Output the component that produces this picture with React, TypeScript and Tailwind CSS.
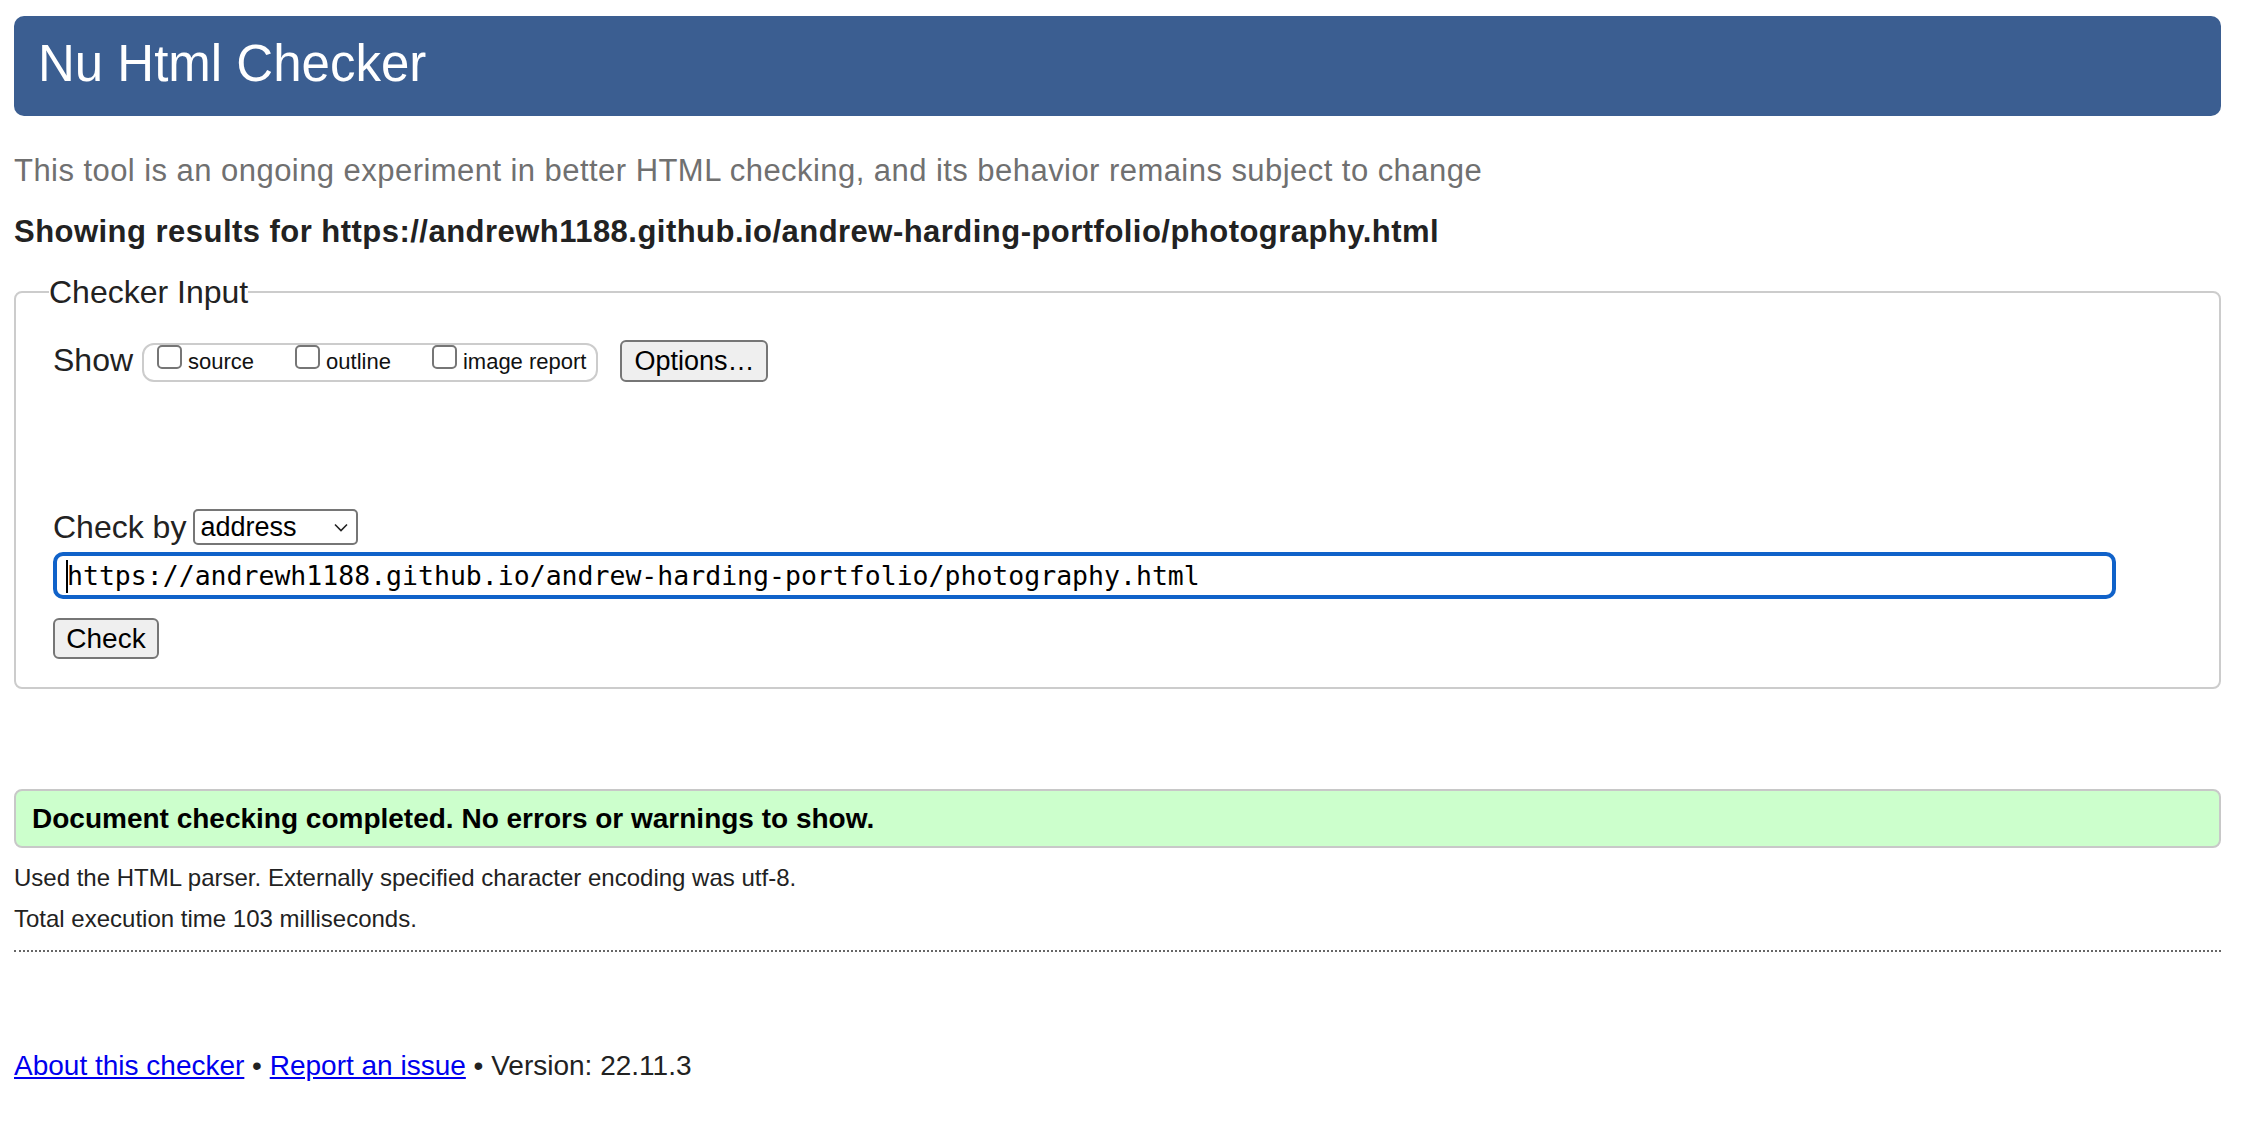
import React from "react";

function Checkbox() {
  return <span className="inline-block w-[25px] h-[24px] border-2 border-[#767676] rounded-[5px] bg-white shrink-0" />;
}

function CheckItem({ label }: { label: string }) {
  return (
    <span className="flex items-baseline">
      <Checkbox />
      <span className="ml-[6px] text-[22px] leading-none text-[#111]">{label}</span>
    </span>
  );
}

export default function App() {
  return (
    <div
      className="min-h-[1125px] bg-white pl-[14px] pr-[21px] pt-[16px] text-[#222]"
      style={{ fontFamily: '"Liberation Sans", Arial, Helvetica, sans-serif' }}
    >
      <header className="h-[100px] rounded-[10px] bg-[#3b5e91] pl-[24px] pt-[22px]">
        <h1 className="text-[51px] leading-none text-white font-normal">Nu Html Checker</h1>
      </header>

      <p className="mt-[39px] text-[31px] leading-none tracking-[0.45px] text-[#707070]">
        This tool is an ongoing experiment in better HTML checking, and its behavior remains subject to change
      </p>

      <p className="mt-[30px] text-[31px] leading-none tracking-[0.47px] font-bold text-[#222]">
        Showing results for https://andrewh1188.github.io/andrew-harding-portfolio/photography.html
      </p>

      <fieldset className="mt-[29px] border-2 border-[#cccccc] rounded-[8px] pb-[28px]">
        <legend className="ml-[33px] text-[32px] leading-none text-[#222]">Checker Input</legend>

        <div className="ml-[37px] mt-[32px] flex items-start">
          <span className="mt-[4px] text-[32px] leading-none text-[#222]">Show</span>
          <div className="ml-[9px] mt-[3px] h-[39px] border-2 border-[#cccccc] rounded-[12px] flex items-start gap-[41px] pl-[13px] pr-[10px]">
            <CheckItem label="source" />
            <CheckItem label="outline" />
            <CheckItem label="image report" />
          </div>
          <button className="ml-[22px] w-[148px] h-[42px] border-2 border-[#767676] rounded-[6px] bg-[#efefef] text-[27px] leading-none text-black">
            Options…
          </button>
        </div>

        <div className="ml-[37px] mt-[127px] flex items-start">
          <span className="mt-[2px] text-[32px] leading-none text-[#222]">Check by</span>
          <div className="ml-[7px] w-[165px] h-[36px] border-2 border-[#767676] rounded-[5px] bg-white flex items-center justify-between pl-[5px] pr-[8px]">
            <span className="text-[27px] leading-none text-black">address</span>
            <svg width="14" height="9" viewBox="0 0 14 9" className="shrink-0">
              <polyline points="1,1.5 7,7.5 13,1.5" fill="none" stroke="#222" strokeWidth="1.6" />
            </svg>
          </div>
        </div>

        <div className="ml-[37px] mt-[7px] w-[2063px] h-[47px] border-4 border-[#1062c9] rounded-[10px] bg-white flex items-center pl-[9px] pt-[2px]">
          <span className="inline-block w-[2px] h-[33px] bg-black -mr-[1px]" />
          <span
            className="text-[26.5px] leading-none text-black whitespace-nowrap"
            style={{ fontFamily: '"DejaVu Sans Mono", "Liberation Mono", monospace' }}
          >
            https://andrewh1188.github.io/andrew-harding-portfolio/photography.html
          </span>
        </div>

        <div className="ml-[37px] mt-[19px]">
          <button className="w-[106px] h-[41px] border-2 border-[#767676] rounded-[6px] bg-[#efefef] text-[28px] leading-none text-black">
            Check
          </button>
        </div>
      </fieldset>

      <div className="mt-[100px] h-[59px] border-2 border-[#c8c8c8] rounded-[8px] bg-[#ccffcc] flex items-center pl-[16px]">
        <span className="text-[28px] leading-none font-bold text-black">
          Document checking completed. No errors or warnings to show.
        </span>
      </div>

      <p className="mt-[18px] text-[24px] leading-none text-[#222]">
        Used the HTML parser. Externally specified character encoding was utf-8.
      </p>
      <p className="mt-[17px] text-[24px] leading-none text-[#222]">Total execution time 103 milliseconds.</p>

      <div className="mt-[19px] border-t-2 border-dotted border-[#666]" />

      <p className="mt-[100px] text-[28px] leading-none text-[#222]">
        <a href="#" className="text-[#0000ee] underline">About this checker</a>
        {" • "}
        <a href="#" className="text-[#0000ee] underline">Report an issue</a>
        {" • Version: 22.11.3"}
      </p>
    </div>
  );
}
